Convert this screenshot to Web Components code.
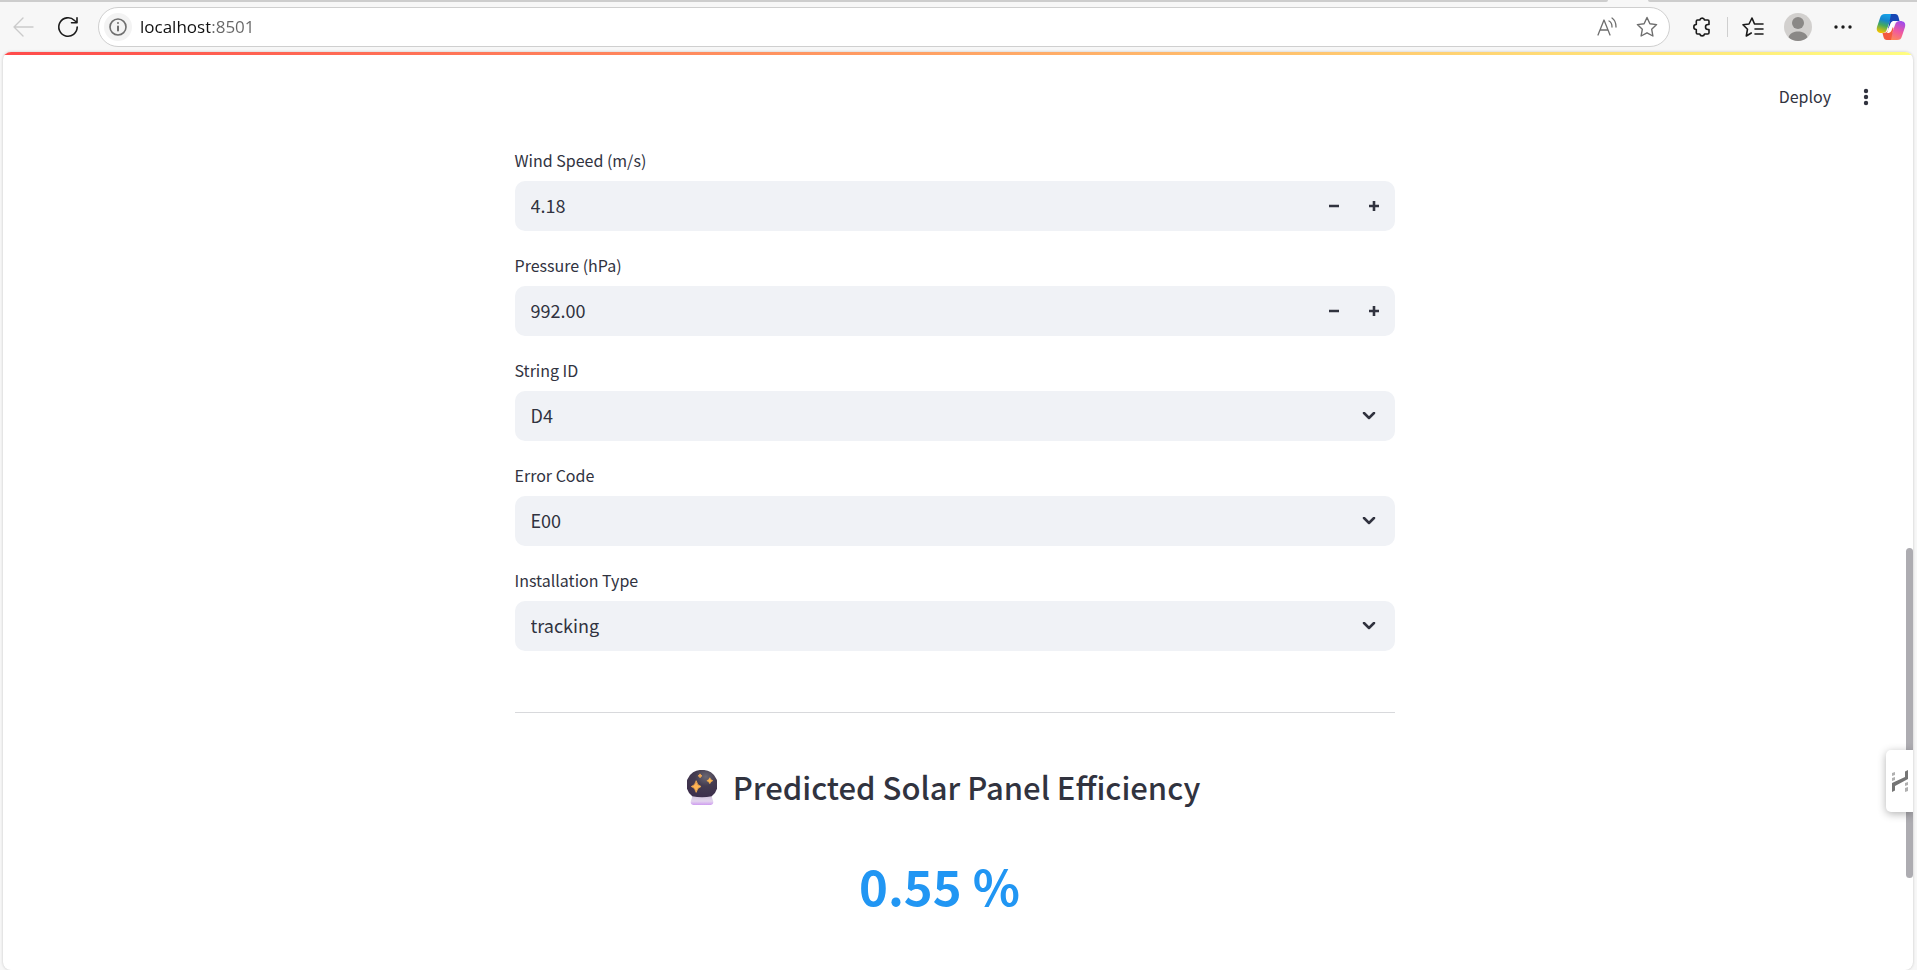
<!DOCTYPE html>
<html lang="en">
<head>
<meta charset="utf-8">
<title>Solar Panel Efficiency</title>
<style>
  html, body { margin: 0; }
  body { background: #f7f7f7; color: #31333f; font-family: "Noto Sans CJK SC", "Noto Sans", sans-serif; }
</style>
</head>
<body>
<app-window>
  <browser-toolbar slot="toolbar"></browser-toolbar>
  <page-header></page-header>
  <form-column>
    <number-field label="Wind Speed (m/s)" value="4.18"></number-field>
    <number-field label="Pressure (hPa)" value="992.00"></number-field>
    <select-field label="String ID" value="D4"></select-field>
    <select-field label="Error Code" value="E00"></select-field>
    <select-field label="Installation Type" value="tracking"></select-field>
    <prediction-result slot="result" value="0.55 %">Predicted Solar Panel Efficiency</prediction-result>
  </form-column>
  <side-handle slot="overlay"></side-handle>
</app-window>

<script>
const define = (name, html) => {
  const template = document.createElement('template');
  customElements.define(name, class extends HTMLElement {
    constructor() {
      super();
      template.innerHTML = typeof html === 'function' ? html(this) : html;
      this.attachShadow({ mode: 'open' }).append(template.content.cloneNode(true));
    }
  });
};

define('app-window', `
  <style>
    :host { display: flex; flex-direction: column; min-height: 100vh; box-sizing: border-box; padding: 0 4px 0 3px; overflow: hidden; }
    .frame { position: relative; flex: 1; background: #fff; border-radius: 8px; box-shadow: 0 0 3px rgba(0,0,0,.2); overflow: hidden; }
    .stripe { height: 3px; background: linear-gradient(90deg, #ff4b4b, #fffd80); }
    .content { padding-right: 7px; }
    .thumb { position: absolute; right: 0; top: 54%; width: 7px; height: 36%; border-radius: 4px; background: #adacb1; }
  </style>
  <slot name="toolbar"></slot>
  <div class="frame">
    <div class="stripe"></div>
    <div class="content"><slot></slot></div>
    <div class="thumb"></div>
    <slot name="overlay"></slot>
  </div>`);

define('browser-toolbar', `
  <style>
    :host { display: flex; align-items: center; height: 52px; box-sizing: border-box; padding: 2px 8px 0 6px; position: relative; }
    .edge { position: absolute; top: 0; left: -3px; right: -4px; height: 2px; display: flex; justify-content: space-between; }
    .edge i { background: #cdcdcd; border-radius: 0 0 4px 0; }
    .edge i:first-child { flex: 1; margin-right: 40px; }
    .edge i:last-child { width: 269px; border-radius: 0 0 0 4px; }
    button { border: 0; padding: 0; background: none; display: grid; place-items: center; width: 28px; height: 28px; }
    svg { display: block; fill: none; stroke: #1b1b1b; stroke-width: 2; stroke-linecap: round; stroke-linejoin: round; overflow: visible; }
    .nav { display: flex; gap: 17px; margin-right: 16px; }
    .address { flex: 1; display: flex; align-items: center; height: 40px; box-sizing: border-box; border: 1px solid #cfcfcf; border-radius: 20px; background: #fff; padding: 0 8px 0 5px; }
    .info { border-radius: 50%; background: #f3f3f3; margin-right: 8px; }
    .address svg { stroke: #6e6e6e; stroke-width: 1; }
    .address .info svg { stroke-width: 2; }
    input { flex: 1; min-width: 0; border: 0; padding: 0 0 2px; outline: 0; height: 28px; box-sizing: border-box; font: 17px "Open Sans", "Noto Sans", sans-serif; background: linear-gradient(90deg, #101010 70px, #666 70px); -webkit-background-clip: text; background-clip: text; color: transparent; }
    .inside { display: flex; gap: 12px; }
    .tools { display: flex; align-items: center; margin-left: 18px; gap: 17px; }
    .sep { width: 1px; height: 20px; background: #cfcfcf; margin: 0 -6px; }
    .solid svg { fill: #1b1b1b; stroke: none; }
    .avatar svg, .copilot svg { stroke: none; }
    .copilot { margin-left: 3px; }
  </style>
  <div class="edge"><i></i><i></i></div>
  <div class="nav">
    <button aria-label="Back"><svg width="20" height="20" viewBox="0 0 20 20" style="stroke:#cbcbcb;stroke-width:1.400"><path d="M20 10H1M10 1L1 10l9 9"/></svg></button>
    <button aria-label="Refresh"><svg width="20" height="20" viewBox="0 0 20 20" style="stroke-width:1.600"><path d="M19.200 10A9.200 9.200 0 1 1 16.500 3.500L19 5.500M19 .8v5h-5.500"/></svg></button>
  </div>
  <div class="address">
    <button class="info" aria-label="Site information"><svg width="18" height="18" viewBox="0 0 18 18"><circle cx="9" cy="9" r="8" stroke-width="1.600"/><path d="M9 8.500v4M9 5v.1"/></svg></button>
    <input aria-label="Address" value="localhost:8501" spellcheck="false">
    <div class="inside">
      <button aria-label="Read aloud"><svg width="20" height="20" viewBox="0 0 20 20" style="stroke-width:1.300"><path d="M1 18L7 3l6 15M3 13h8M12 4c2 1 3 3 3 6M15 1c3 2 4 5 4 9"/></svg></button>
      <button aria-label="Favorite"><svg width="22" height="22" viewBox="0 0 22 22" style="stroke-width:1.400"><path d="M11 1.500l2.900 6.200 6.700.9-4.900 4.700 1.200 6.700-5.900-3.200L5.100 20l1.200-6.700L1.400 8.600l6.700-.9z"/></svg></button>
    </div>
  </div>
  <div class="tools">
    <button aria-label="Extensions"><svg width="20" height="20" viewBox="0 0 20 20" style="stroke-width:1.600"><path d="M5.500 3h2.300a2.400 2.400 0 0 1 4.700 0h3.300q1.200 0 1.200 1.200v3.300h-1a2.500 2.500 0 0 0 0 5h1v3.300q0 1.200-1.200 1.200h-3.300a2.400 2.400 0 0 1-4.700 0H5.500q-1.200 0-1.200-1.200v-3.300a2.500 2.500 0 0 1 0-5V4.200Q4.300 3 5.500 3z"/></svg></button>
    <span class="sep"></span>
    <button aria-label="Favorites"><svg width="22" height="20" viewBox="0 0 22 20" style="stroke-width:1.600"><path d="M12.500 7L10 1 7 7l-6 .8 4.500 4.400L4.300 19l5-3M12.500 7H21M13 12h8M13 17h8"/></svg></button>
    <button class="avatar" aria-label="Profile"><svg width="28" height="28" viewBox="0 0 28 28"><circle cx="14" cy="14" r="14" fill="#d2d0ce"/><circle cx="14" cy="10" r="6" fill="#8a8886"/><path fill="#8a8886" d="M4.500 24.300C6 20 10 18.500 14 18.500s8 1.500 9.500 5.800A14 14 0 0 1 4.500 24.300z"/></svg></button>
    <button class="solid" aria-label="Settings and more"><svg width="18" height="4" viewBox="0 0 18 4"><circle cx="2" cy="2" r="1.700"/><circle cx="9" cy="2" r="1.700"/><circle cx="16" cy="2" r="1.700"/></svg></button>
    <button class="copilot" aria-label="Copilot"><svg width="28" height="26" viewBox="0 0 28 26">
      <defs>
        <linearGradient id="a" x1=".6" y1="0" x2=".3" y2="1"><stop offset="0" stop-color="#16a5e9"/><stop offset=".35" stop-color="#1686cf"/><stop offset=".62" stop-color="#45a95e"/><stop offset="1" stop-color="#f2c400"/></linearGradient>
        <linearGradient id="b" x1=".7" y1="0" x2=".3" y2="1"><stop offset="0" stop-color="#a04bea"/><stop offset=".5" stop-color="#ef58a2"/><stop offset="1" stop-color="#ff8a55"/></linearGradient>
      </defs>
      <path fill="url(#a)" d="M8 0h11l-5 4-4 11c-1 3-2 4-5 4-4 0-6-2-5-6L3 4C4 1 5 0 8 0z"/>
      <path fill="#1747b5" d="M14 0h4c2 0 3 1 3.500 3L22.500 7H18c-3 0-4 2-5 5l-2 3z"/>
      <path fill="url(#b)" d="M20 26H9l5-4 4-11c1-3 2-4 5-4 4 0 6 2 5 6l-3 9c-1 3-2 4-5 4z"/>
      <path fill="#f45a3e" d="M14 26h-4c-2 0-3-1-3.500-3L5.500 19c4 0 5-1 6-4l2-4 3 3z"/>
      <path fill="#fff" d="M13.500 9.500c1-2 2-2.500 4.500-2.500l-3.500 9.500c-1 2-2 2.500-4.500 2.500z"/>
    </svg></button>
  </div>`);

define('page-header', `
  <style>
    :host { display: flex; justify-content: flex-end; align-items: center; gap: 20px; height: 84px; padding-right: 25px; }
    button { border: 0; background: none; padding: 0 0 2px; color: inherit; font: 16px/24px "Noto Sans CJK SC", "Noto Sans", sans-serif; }
    .more { width: 30px; height: 30px; padding: 0; display: grid; place-items: center; }
  </style>
  <button>Deploy</button>
  <button class="more" aria-label="Main menu"><svg width="6" height="18" viewBox="0 0 6 18" fill="#31333f"><circle cx="3" cy="3" r="2.200"/><circle cx="3" cy="9" r="2.200"/><circle cx="3" cy="15" r="2.200"/></svg></button>`);

define('form-column', `
  <style>
    :host { display: block; max-width: 880px; margin: 0 auto; padding: 10px 16px 24px; }
    .fields { display: grid; gap: 23px; }
    hr { border: 0; border-top: 1px solid #d8d9dc; margin: 61px 0 0; }
  </style>
  <div class="fields"><slot></slot></div>
  <hr>
  <slot name="result"></slot>`);

const fieldStyle = `
    :host { display: flex; flex-direction: column; gap: 10px; }
    label { font-size: 16px; line-height: 22px; }
    .box { display: flex; align-items: center; height: 50px; border-radius: 10px; background: #f0f2f6; overflow: hidden; position: relative; }
    input, select { flex: 1; align-self: stretch; min-width: 0; margin: 0; border: 0; outline: 0; background: none; color: inherit; padding: 0 16px 2px; font: 18px/24px "Noto Sans CJK SC", "Noto Sans", sans-serif; appearance: none; }
    svg { display: block; fill: none; stroke: #31333f; }`;

define('number-field', el => `
  <style>${fieldStyle}
    .box { padding-right: 1px; }
    button { border: 0; background: none; padding: 0; width: 40px; height: 50px; display: grid; place-items: center; }
    svg { stroke-width: 2.600; }
  </style>
  <label for="field">${el.getAttribute('label')}</label>
  <div class="box">
    <input id="field" inputmode="decimal" value="${el.getAttribute('value')}">
    <button aria-label="Decrease"><svg width="10" height="10" viewBox="0 0 10 10"><path d="M0 5h10"/></svg></button>
    <button aria-label="Increase"><svg width="10" height="10" viewBox="0 0 10 10"><path d="M0 5h10M5 0v10"/></svg></button>
  </div>`);

define('select-field', el => `
  <style>${fieldStyle}
    svg { position: absolute; right: 19px; stroke-width: 2.500; stroke-linecap: round; stroke-linejoin: round; pointer-events: none; }
  </style>
  <label for="field">${el.getAttribute('label')}</label>
  <div class="box">
    <select id="field"><option>${el.getAttribute('value')}</option></select>
    <svg width="14" height="8" viewBox="0 0 14 8"><path d="M2 1l5 5 5-5"/></svg>
  </div>`);

define('prediction-result', el => `
  <style>
    :host { display: block; }
    h2 { display: flex; justify-content: center; align-items: center; gap: 16px; margin: 50px 22px 0 0; font-size: 31px; line-height: 48px; font-weight: 500; }
    svg { display: block; }
    p { margin: 38px 30px 0 0; text-align: center; color: #2196f3; font-size: 49px; line-height: 72px; font-weight: 700; }
  </style>
  <h2><svg width="30" height="35" viewBox="0 0 30 36" aria-hidden="true">
    <defs>
      <radialGradient id="ball" cx=".62" cy=".25" r=".75"><stop offset="0" stop-color="#6b6873"/><stop offset=".45" stop-color="#443c50"/><stop offset="1" stop-color="#3d2f4c"/></radialGradient>
      <linearGradient id="base" x1="0" y1="0" x2="0" y2="1"><stop offset="0" stop-color="#cfc2d9"/><stop offset=".6" stop-color="#e3d5ee"/><stop offset="1" stop-color="#cf9cf0"/></linearGradient>
      <linearGradient id="gold" x1="0" y1="0" x2="1" y2="1"><stop offset="0" stop-color="#ff9b5a"/><stop offset="1" stop-color="#ffd04a"/></linearGradient>
    </defs>
    <path fill="url(#base)" d="M5 26h20c0 3 1 4 1.500 6 .5 2.500-.5 4-2.500 4H6c-2 0-3-1.500-2.500-4C4 30 5 29 5 26z"/>
    <path fill="url(#ball)" d="M15 0a15 15 0 0 1 10 27q-10 2-20 0A15 15 0 0 1 15 0z"/>
    <path fill="url(#gold)" d="M9 11q1 5 5 6-4 1-5 6-1-5-5-6 4-1 5-6zM23 8q.7 2.500 3 3-2.300.5-3 3-.7-2.500-3-3 2.300-.5 3-3zM13 4q.5 1.500 2 2-1.500.5-2 2-.5-1.500-2-2 1.500-.5 2-2z" stroke="#f6ac50" stroke-width=".8"/>
  </svg><span><slot></slot></span></h2>
  <p>${el.getAttribute('value')}</p>`);

define('side-handle', `
  <style>
    :host { display: block; position: absolute; right: 0; top: 76%; }
    button { width: 27px; height: 62px; border: 0; padding: 0; background: #fff; border-radius: 5px 0 0 5px; box-shadow: 0 2px 8px rgba(0,0,0,.3); display: grid; place-items: center; }
  </style>
  <button aria-label="Open side panel"><svg width="16" height="22" viewBox="0 0 16 22">
    <path fill="#757575" d="M13 1.500L16 0v9L3 16v4.500L0 22v-9L13 7z"/>
    <path fill="#b0b0b0" d="M0 3l3-1v3L0 6zM0 8l3-1v3L0 11zM13 13l3-1v3l-3 1zM13 18l3-1v4l-3 1z"/>
  </svg></button>`);
</script>
</body>
</html>
